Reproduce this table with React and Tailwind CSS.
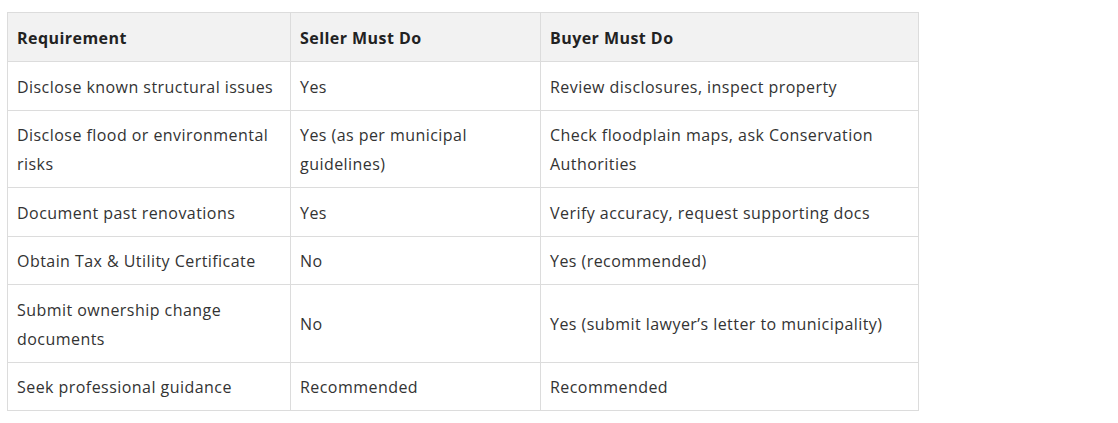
const ROWS = [
  ["Disclose known structural issues", "Yes", "Review disclosures, inspect property"],
  ["Disclose flood or environmental risks", "Yes (as per municipal guidelines)", "Check floodplain maps, ask Conservation Authorities"],
  ["Document past renovations", "Yes", "Verify accuracy, request supporting docs"],
  ["Obtain Tax & Utility Certificate", "No", "Yes (recommended)"],
  ["Submit ownership change documents", "No", "Yes (submit lawyer’s letter to municipality)"],
  ["Seek professional guidance", "Recommended", "Recommended"],
];

const HEADERS = ["Requirement", "Seller Must Do", "Buyer Must Do"];

export default function App() {
  return (
    <div className="bg-white min-h-[423px] pl-[7px] pt-[12px] font-['Open_Sans',sans-serif] text-[16px] tracking-[0.45px] text-[#333]">
      <table className="table-fixed border-collapse w-[911px]">
        <colgroup>
          <col className="w-[283px]" />
          <col className="w-[250px]" />
          <col className="w-[378px]" />
        </colgroup>
        <thead>
          <tr className="bg-[#f2f2f2]">
            {HEADERS.map(h => (
              <th key={h} className="border border-[#dcdcdc] pl-[9px] pr-[10px] pt-[10.5px] pb-[8.5px] leading-[29px] text-left font-bold text-[#222]">
                {h}
              </th>
            ))}
          </tr>
        </thead>
        <tbody>
          {ROWS.map((row, i) => (
            <tr key={i}>
              {row.map((cell, j) => (
                <td key={j} className="border border-[#dcdcdc] pl-[9px] pr-[10px] pt-[10.5px] pb-[8px] leading-[29px] align-middle">
                  {cell}
                </td>
              ))}
            </tr>
          ))}
        </tbody>
      </table>
    </div>
  );
}
